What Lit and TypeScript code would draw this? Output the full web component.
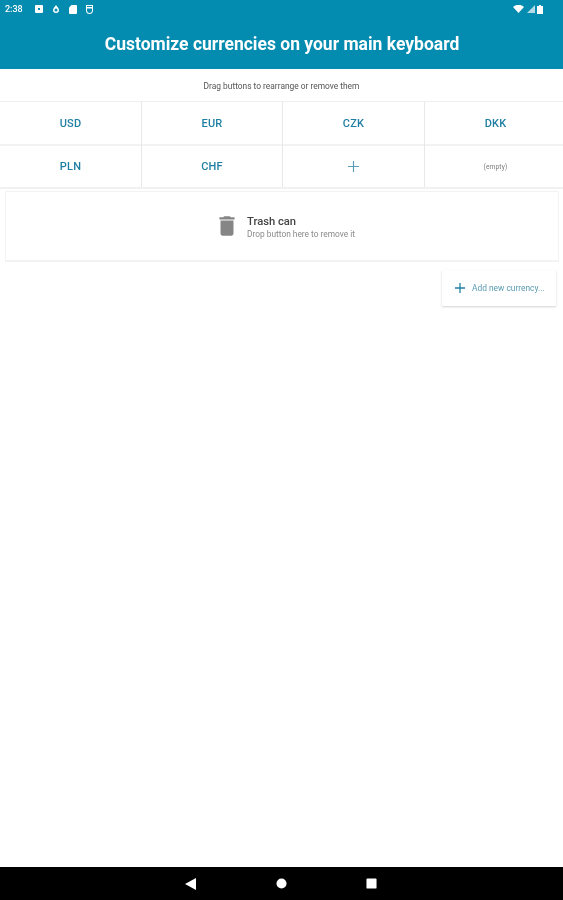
import { LitElement, html, css } from "lit";
import { customElement } from "lit/decorators.js";

@customElement("app-root")
export class AppRoot extends LitElement {
  static styles = css`
    :host {
      display: flex;
      flex-direction: column;
      width: 563px;
      height: 900px;
      background: #fff;
      font-family: Roboto, "Liberation Sans", sans-serif;
      overflow: hidden;
    }
    .soft { filter: blur(0.5px); }
    .top { background: #038bb0; height: 69px; flex: none; display: flex; flex-direction: column; }
    .status { height: 18px; padding: 0 20px 0 5px; display: flex; align-items: center; color: #fff; flex: none; }
    .time { font-size: 9px; font-weight: 500; width: 30px; }
    .status svg { display: block; fill: #fff; }
    .s1 { margin-right: 10px; }
    .s2 { margin-right: 10px; }
    .s3 { margin-right: 9px; }
    .signal { margin: 0 2px 0 3px; }
    .spacer { flex: 1; }
    .title {
      flex: 1;
      display: flex;
      align-items: center;
      justify-content: center;
      color: #fff;
      font-size: 17.5px;
      font-weight: 700;
      padding-left: 1px;
    }
    .hint {
      height: 32px;
      flex: none;
      box-sizing: border-box;
      padding-top: 11px;
      text-align: center;
      font-size: 8.4px;
      line-height: 12px;
      color: #555;
    }
    .grid {
      display: grid;
      grid-template-columns: 141px 140px 141px 138px;
      column-gap: 1px;
      border-top: 1px solid #f0f0f0;
      border-bottom: 2px solid #f1f1f1;
      background: #e8e8e8;
      flex: none;
    }
    .cell {
      height: 42px;
      background: #fff;
      display: flex;
      align-items: center;
      justify-content: center;
      color: #1f7fa3;
      font-size: 11px;
      font-weight: 500;
      letter-spacing: 0.2px;
    }
    .cell.r1 { border-bottom: 2px solid #f3f3f3; }
    .cell.r2 { height: 41px; }
    .cell.last { padding-left: 3px; }
    .cell .empty { color: #777; font-size: 6.5px; font-weight: 400; }
    .trash {
      margin: 2px 4px 0 5px;
      height: 71px;
      flex: none;
      box-sizing: border-box;
      border: 1px solid #f3f3f3;
      border-bottom-width: 2px;
      display: flex;
      align-items: center;
      justify-content: center;
      gap: 8px;
      padding-left: 6px;
    }
    .trash svg { fill: #858585; display: block; }
    .trash-text { margin-top: 4px; }
    .t1 { font-size: 11.2px; font-weight: 500; color: #444; line-height: 13px; }
    .t2 { font-size: 8.35px; color: #8a8a8a; line-height: 13px; }
    .row { display: flex; justify-content: flex-end; padding: 8px 7px 0 0; flex: none; }
    .add {
      width: 114px;
      height: 36px;
      box-sizing: border-box;
      display: flex;
      align-items: center;
      padding-left: 13px;
      gap: 7px;
      background: #fff;
      box-shadow: 0 1px 2px rgba(0, 0, 0, 0.18);
      color: #5a9bb3;
      font-size: 8.4px;
    }
    .add svg { stroke: #1f7fa3; stroke-width: 1.4; fill: none; display: block; }
    .plus svg { stroke: #5f9db6; stroke-width: 1.2; fill: none; display: block; }
    .main { flex: 1; }
    .nav {
      height: 33px;
      flex: none;
      background: #000;
      display: grid;
      grid-template-columns: 91px 90px 11px;
      align-items: center;
      justify-content: center;
      padding-right: 1px;
    }
    .nav svg { fill: #fff; display: block; }
  `;

  render() {
    return html`
      <div class="top">
        <div class="status soft">
          <span class="time">2:38</span>
          <svg class="s1" width="8" height="8" viewBox="0 0 8 8"><path d="M1 0h6a1 1 0 0 1 1 1v6a1 1 0 0 1-1 1H1a1 1 0 0 1-1-1V1a1 1 0 0 1 1-1zm2 3v2h2V3z" /></svg>
          <svg class="s2" width="6" height="8" viewBox="0 0 6 8"><path d="M3 0c1 1.500 3 3.200 3 5a3 3 0 0 1-6 0c0-1.800 2-3.500 3-5zm0 3.500a1.500 1.500 0 0 0 0 3 1.500 1.500 0 0 0 0-3z" /></svg>
          <svg class="s3" width="8" height="9" viewBox="0 0 8 9"><path d="M2.500 0H7a1 1 0 0 1 1 1v7a1 1 0 0 1-1 1H1a1 1 0 0 1-1-1V2.500z" /></svg>
          <svg width="7" height="9" viewBox="0 0 7 9"><path d="M0 0h7v5a3.500 4 0 0 1-7 0zm1 1v1h5V1zm0 2.500V5a2.500 3 0 0 0 5 0V3.500z" /></svg>
          <span class="spacer"></span>
          <svg width="11" height="8" viewBox="0 0 11 8"><path d="M0 2a8 8 0 0 1 11 0L5.500 8z" /></svg>
          <svg class="signal" width="8" height="8" viewBox="0 0 8 8"><path d="M8 0v8H0z" opacity=".7" /></svg>
          <svg width="6" height="9" viewBox="0 0 6 9"><path d="M2 0h2v1h2v8H0V1h2z" /></svg>
        </div>
        <div class="title soft">Customize currencies on your main keyboard</div>
      </div>
      <div class="hint soft">Drag buttons to rearrange or remove them</div>
      <div class="grid">
        <div class="cell r1"><span class="soft">USD</span></div>
        <div class="cell r1"><span class="soft">EUR</span></div>
        <div class="cell r1"><span class="soft">CZK</span></div>
        <div class="cell r1 last"><span class="soft">DKK</span></div>
        <div class="cell r2"><span class="soft">PLN</span></div>
        <div class="cell r2"><span class="soft">CHF</span></div>
        <div class="cell r2 plus">
          <svg class="soft" width="11" height="11" viewBox="0 0 11 11"><path d="M5.500 0v11M0 5.500h11" /></svg>
        </div>
        <div class="cell r2 last"><span class="empty soft">(empty)</span></div>
      </div>
      <div class="trash">
        <svg class="soft" width="24" height="24" viewBox="0 0 24 24"><path d="M6 19c0 1.100.9 2 2 2h8c1.100 0 2-.9 2-2V7H6v12zM19 4h-3.500l-1-1h-5l-1 1H5v2h14V4z" transform="translate(-.96 -.96) scale(1.080)" /></svg>
        <div class="soft trash-text">
          <div class="t1">Trash can</div>
          <div class="t2">Drop button here to remove it</div>
        </div>
      </div>
      <div class="row">
        <div class="add">
          <svg class="soft" width="10" height="10" viewBox="0 0 11 11"><path d="M5.500 0v11M0 5.500h11" /></svg>
          <span class="soft">Add new currency...</span>
        </div>
      </div>
      <div class="main"></div>
      <div class="nav">
        <svg class="soft" width="11" height="12" viewBox="0 0 11 12"><path d="M11 0v12L0 6z" /></svg>
        <svg class="soft" width="11" height="11" viewBox="0 0 12 12"><circle cx="6" cy="6" r="5.500" /></svg>
        <svg class="soft" width="11" height="11" viewBox="0 0 12 12"><rect x=".5" y=".5" width="11" height="11" rx="1" /></svg>
      </div>
    `;
  }
}
